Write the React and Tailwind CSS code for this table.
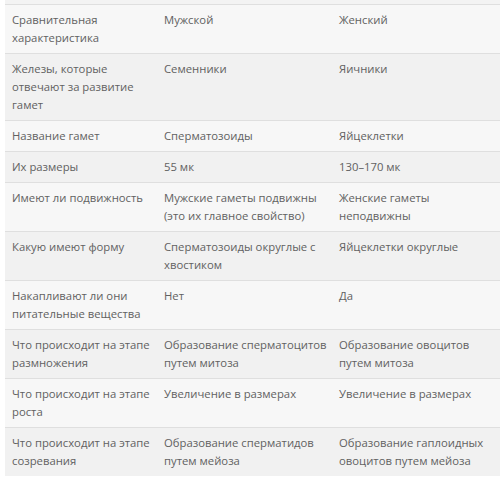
const rows = [
  ['Сравнительная характеристика', 'Мужской', 'Женский'],
  ['Железы, которые отвечают за развитие гамет', 'Семенники', 'Яичники'],
  ['Название гамет', 'Сперматозоиды', 'Яйцеклетки'],
  ['Их размеры', '55 мк', '130–170 мк'],
  ['Имеют ли подвижность', 'Мужские гаметы подвижны (это их главное свойство)', 'Женские гаметы неподвижны'],
  ['Какую имеют форму', 'Сперматозоиды округлые с хвостиком', 'Яйцеклетки округлые'],
  ['Накапливают ли они питательные вещества', 'Нет', 'Да'],
  ['Что происходит на этапе размножения', 'Образование сперматоцитов путем митоза', 'Образование овоцитов путем митоза'],
  ['Что происходит на этапе роста', 'Увеличение в размерах', 'Увеличение в размерах'],
  ['Что происходит на этапе созревания', 'Образование сперматидов путем мейоза', 'Образование гаплоидных овоцитов путем мейоза'],
];

export default function App() {
  return (
    <div className="w-[500px] h-[500px] overflow-hidden bg-white pl-[5px] font-['Open_Sans',sans-serif] text-[11.3px] leading-[18px] text-[#616161]">
      <div className="h-[4px] bg-[#f3f3f3]" />
      <table className="w-[495px] table-fixed border-collapse">
        <colgroup>
          <col className="w-[152px]" />
          <col className="w-[175px]" />
          <col />
        </colgroup>
        <tbody>
          {rows.map((r, i) => (
            <tr
              key={i}
              className={`border-t border-[#dfdfdf] ${i % 2 === 0 ? 'bg-[#f7f7f7]' : 'bg-[#f1f1f1]'}`}
            >
              {r.map((c, j) => (
                <td key={j} className="align-top pl-[7px] pr-[4px] py-[6px]">
                  {c}
                </td>
              ))}
            </tr>
          ))}
        </tbody>
      </table>
    </div>
  );
}
